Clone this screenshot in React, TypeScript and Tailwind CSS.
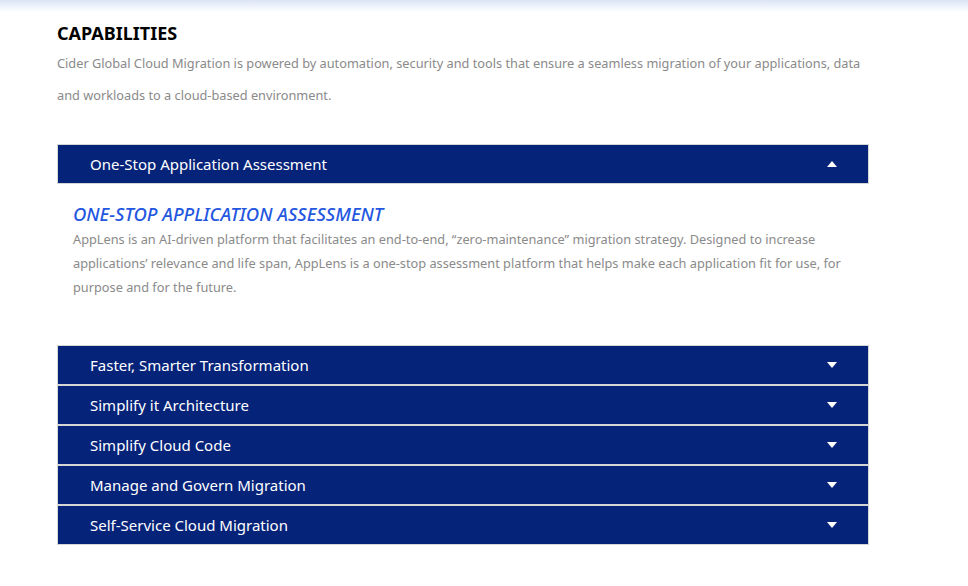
import React, { useState } from 'react';

const items = [
  {
    title: 'One-Stop Application Assessment',
    heading: 'ONE-STOP APPLICATION ASSESSMENT',
    body: 'AppLens is an AI-driven platform that facilitates an end-to-end, \u201Czero-maintenance\u201D migration strategy. Designed to increase applications\u2019 relevance and life span, AppLens is a one-stop assessment platform that helps make each application fit for use, for purpose and for the future.',
  },
  { title: 'Faster, Smarter Transformation', heading: 'FASTER, SMARTER TRANSFORMATION', body: '' },
  { title: 'Simplify it Architecture', heading: 'SIMPLIFY IT ARCHITECTURE', body: '' },
  { title: 'Simplify Cloud Code', heading: 'SIMPLIFY CLOUD CODE', body: '' },
  { title: 'Manage and Govern Migration', heading: 'MANAGE AND GOVERN MIGRATION', body: '' },
  { title: 'Self-Service Cloud Migration', heading: 'SELF-SERVICE CLOUD MIGRATION', body: '' },
];

// Маленький треугольник справа в заголовке
function Caret({ up }: { up: boolean }) {
  return (
    <svg width="10" height="6" viewBox="0 0 10 6" className="shrink-0">
      {up ? <path d="M5 0L10 6H0z" fill="#fff" /> : <path d="M0 0h10L5 6z" fill="#fff" />}
    </svg>
  );
}

export default function App() {
  const [open, setOpen] = useState(0);

  return (
    <div className="min-h-[586px] bg-white" style={{ fontFamily: '"Noto Sans", "Open Sans", sans-serif' }}>
      <div className="h-[12px] bg-gradient-to-b from-[#dbe4f5] to-white" />

      <div className="pl-[57px] pr-[60px] pt-[9px]">
        <h2 className="text-[18px] font-bold leading-[24px] text-black">CAPABILITIES</h2>
        <p className="mt-[2px] w-[820px] text-[12.75px] leading-[32px] text-[#8a8a8a]">
          Cider Global Cloud Migration is powered by automation, security and tools that ensure a seamless migration of your applications, data and workloads to a cloud-based environment.
        </p>

        <div className="mt-[33px] w-[812px]">
          {items.map((item, i) => (
            <div key={item.title}>
              <button
                onClick={() => setOpen(open === i ? -1 : i)}
                className="flex h-[40px] w-full items-center justify-between border border-[#d6d6d6] bg-[#06237a] pl-[32px] pr-[31px] text-left"
              >
                <span className="text-[15px] text-white">{item.title}</span>
                <Caret up={open === i} />
              </button>
              {open === i && (
                <div className="px-[16px] pt-[17px] pb-[46px]">
                  <h3 className="text-[18.4px] font-medium italic leading-[26px] text-[#2457e0]">{item.heading}</h3>
                  <p className="text-[12.75px] leading-[24px] text-[#8a8a8a]">{item.body}</p>
                </div>
              )}
            </div>
          ))}
        </div>
      </div>
    </div>
  );
}
